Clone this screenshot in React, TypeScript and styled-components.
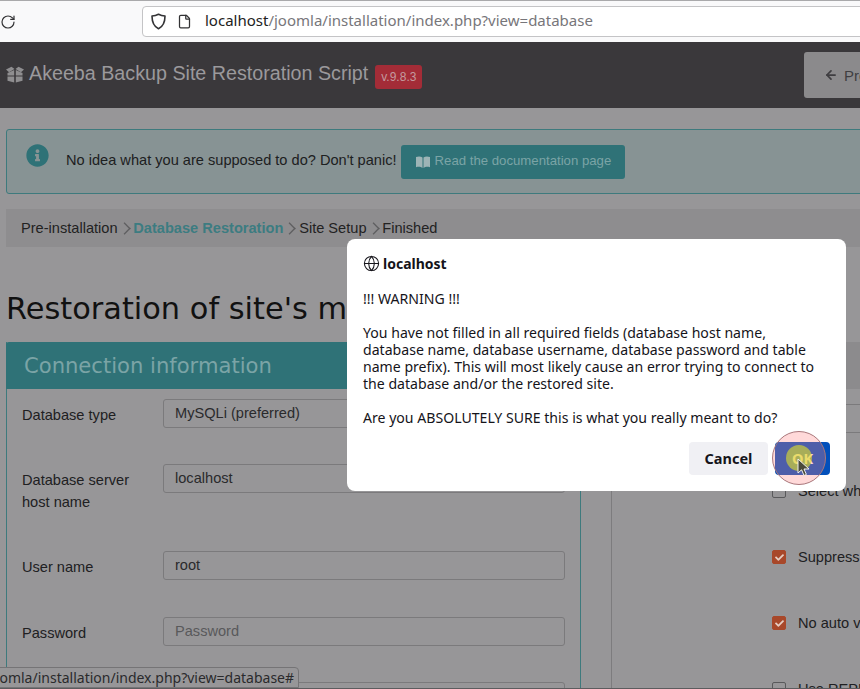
import { createGlobalStyle, styled } from 'styled-components'
import { ArrowLeft, File, Globe, RotateCw } from 'lucide-react'
import { FaCheck, FaInfoCircle } from 'react-icons/fa'

const GlobalStyle = createGlobalStyle`
  html, body {
    margin: 0;
    padding: 0;
    overflow: hidden;
    background: #979698;
  }
  * {
    box-sizing: border-box;
  }
`

const Frame = styled.div`
  position: relative;
  width: 860px;
  height: 689px;
  overflow: hidden;
  background: #979698;
  font-family: "Liberation Sans", Arial, sans-serif;
  border-bottom: 1px solid #5c5c5e;
`

const BrowserBar = styled.div`
  display: flex;
  align-items: center;
  height: 42px;
  padding-left: 0;
  background: #f9f9fa;
  border-top: 1px solid #a9a9ab;
  color: #333335;
`

const UrlBox = styled.div`
  display: flex;
  align-items: center;
  flex: 1;
  height: 31px;
  margin: -1px -4px 0 126px;
  padding-left: 8px;
  background: #fff;
  border: 1px solid #c4c4c6;
  border-radius: 4px 0 0 4px;
  svg {
    flex: none;
  }
`

const UrlText = styled.span`
  margin-left: 13px;
  font-family: "Noto Sans", sans-serif;
  font-size: 15px;
  line-height: 20px;
  margin-top: -2px;
  color: #77767a;
  b {
    font-weight: 400;
    color: #222;
  }
`

const PageIcon = styled.span`
  display: flex;
  margin-left: 11px;
`

const Navbar = styled.div`
  display: flex;
  align-items: center;
  justify-content: space-between;
  height: 66px;
  padding: 0 0 0 6px;
  background: #3a383b;
  margin-bottom: 21px;
`

const Brand = styled.div`
  display: flex;
  align-items: center;
  color: #9b999c;
  font-size: 19.7px;
  margin-top: -4px;
  svg {
    margin-right: 5px;
    margin-top: 2px;
  }
`

const VersionBadge = styled.span`
  margin-left: 7px;
  padding: 5px 6px;
  background: #a32c37;
  border-radius: 3px;
  color: #c49a9f;
  font-size: 12px;
  margin-top: 7px;
`

const PrevButton = styled.div`
  display: flex;
  align-items: center;
  gap: 6px;
  width: 56px;
  height: 46px;
  padding-left: 20px;
  background: #8b8a8c;
  border-radius: 3px 0 0 3px;
  color: #3f3e41;
  font-size: 15px;
  overflow: hidden;
  svg {
    flex: none;
  }
`

const Content = styled.div`
  width: 1190px;
  margin-left: 6px;
`

const Alert = styled.div`
  display: flex;
  align-items: flex-start;
  height: 65px;
  padding: 14px 0 0 19px;
  background: #879394;
  border: 1px solid #3e7a7d;
  border-radius: 3px;
  margin-bottom: 15px;
  color: #2f7277;
`

const AlertText = styled.span`
  margin: 8px 4px 0 17px;
  font-size: 14.6px;
  color: #1d2021;
`

const DocsButton = styled.div`
  display: flex;
  align-items: center;
  gap: 5px;
  height: 34px;
  margin-top: 1px;
  padding: 0 14px 3px 15px;
  background: #2f7277;
  border-radius: 3px;
  color: #7ba4a6;
  font-size: 13.2px;
  svg {
    margin-top: 3px;
  }
`

const Breadcrumb = styled.div`
  display: flex;
  align-items: center;
  height: 38px;
  padding: 0 15px;
  background: #8e8d8f;
  font-size: 14.6px;
  color: #222;
`

const Crumb = styled.span<{ $active?: boolean }>`
  font-weight: ${p => (p.$active ? 700 : 400)};
  color: ${p => (p.$active ? '#3c7c81' : '#222')};
`

const CrumbSep = styled.span`
  width: 7px;
  height: 7px;
  margin: 0 5.8px 0 3px;
  border-top: 1.5px solid #5e5e60;
  border-right: 1.5px solid #5e5e60;
  transform: rotate(45deg) scale(1.25);
`

const Heading = styled.h1`
  margin: 44px 0 15px;
  font-family: "DejaVu Sans", sans-serif;
  font-size: 30.4px;
  font-weight: 400;
  line-height: 36px;
  color: #111;
  white-space: nowrap;
`

const Columns = styled.div`
  display: flex;
  gap: 30px;
`

const Panel = styled.div<{ $teal?: boolean }>`
  width: 575px;
  flex: none;
  height: 400px;
  border-left: 1px solid ${p => (p.$teal ? '#3e7a7d' : '#7d7c7e')};
  border-right: 1px solid ${p => (p.$teal ? '#3e7a7d' : '#7d7c7e')};
`

const PanelHead = styled.div<{ $teal?: boolean }>`
  height: 47px;
  margin-left: -1px;
  padding: 10px 18px;
  background: ${p => (p.$teal ? '#2f7277' : '#8c8b8d')};
  border-radius: 3px 3px 0 0;
  font-family: "DejaVu Sans", sans-serif;
  font-size: 21.1px;
  line-height: 27px;
  color: #7ba4a6;
`

const FormGrid = styled.div`
  display: grid;
  grid-template-columns: 125px 402px;
  column-gap: 16px;
  row-gap: 36px;
  padding: 10px 15px 0;
`

const FieldLabel = styled.div`
  padding: 6px 0 1.6px;
  font-size: 14.6px;
  line-height: 21.7px;
  color: #202022;
`

const TextBox = styled.div<{ $placeholder?: boolean }>`
  height: 29px;
  padding: 3px 11px;
  border: 1px solid #7b7a7c;
  border-radius: 3px;
  font-size: 14.6px;
  line-height: 20px;
  color: ${p => (p.$placeholder ? '#59595b' : '#2a2a2c')};
`

const OptionList = styled.div`
  display: flex;
  flex-direction: column;
  padding: 15px 0 0 160px;
`

const WideBox = styled(TextBox)`
  width: 400px;
  margin-bottom: 48px;
`

const CheckRow = styled.div`
  display: flex;
  align-items: center;
  gap: 12px;
  height: 20px;
  margin-bottom: 46px;
  font-size: 14.6px;
  color: #202022;
  white-space: nowrap;
`

const CheckBox = styled.span<{ $on?: boolean }>`
  display: flex;
  align-items: center;
  justify-content: center;
  width: 14px;
  height: 14px;
  background: ${p => (p.$on ? '#a8482a' : 'transparent')};
  border: 1px solid ${p => (p.$on ? '#a8482a' : '#59595b')};
  border-radius: 2px;
  color: #e6cdc2;
`

const StatusTip = styled.div`
  position: absolute;
  left: -78px;
  bottom: 0;
  height: 21px;
  padding: 0 4px 0 0;
  background: #979698;
  border: 1px solid #757476;
  border-radius: 0 4px 0 0;
  font-family: "Noto Sans", sans-serif;
  font-size: 14px;
  line-height: 20px;
  color: #2a2a2c;
  white-space: nowrap;
`

const Dialog = styled.div`
  position: absolute;
  left: 347px;
  top: 239px;
  width: 499px;
  height: 252px;
  padding: 14px 16px 16px;
  background: #fff;
  border-radius: 8px;
  font-family: "Noto Sans", sans-serif;
  font-size: 14.1px;
  line-height: 17px;
  color: #15141a;
`

const DialogHost = styled.div`
  display: flex;
  align-items: center;
  gap: 3px;
  height: 20px;
  margin-bottom: 17px;
  font-weight: 700;
  font-size: 14px;
`

const DialogLine = styled.p`
  margin: 0 0 17px;
  white-space: nowrap;
  &:last-of-type {
    margin-bottom: 0;
  }
`

const DialogActions = styled.div`
  display: flex;
  justify-content: flex-end;
  gap: 7px;
  margin-top: 16px;
`

const DialogButton = styled.div<{ $primary?: boolean }>`
  display: flex;
  align-items: center;
  justify-content: center;
  width: ${p => (p.$primary ? '55px' : '79px')};
  height: 33px;
  padding-bottom: 1px;
  background: ${p => (p.$primary ? '#0250bb' : '#f0f0f4')};
  border-radius: 4px;
  font-weight: 700;
  font-size: 14.5px;
  color: ${p => (p.$primary ? '#fbfbfe' : '#15141a')};
`

const ClickRing = styled.div`
  position: absolute;
  left: 772px;
  top: 431px;
  display: flex;
  align-items: center;
  justify-content: center;
  width: 54px;
  height: 54px;
  background: rgba(255, 130, 130, 0.3);
  border: 1px solid #a9777b;
  border-radius: 50%;
`

const ClickDot = styled.div`
  width: 26px;
  height: 26px;
  background: rgba(225, 222, 40, 0.62);
  border-radius: 50%;
`

const Pointer = styled.svg`
  position: absolute;
  left: 797px;
  top: 458px;
`

const ShieldIcon = () => (
  <svg width="15" height="17" viewBox="0 0 15 17" fill="none" stroke="currentColor" strokeWidth="1.6" strokeLinejoin="round">
    <path d="M7.5 1.2 C9.5 2.2 11.6 2.8 14 3 C14 9 12.6 13.2 7.5 15.8 C2.4 13.2 1 9 1 3 C3.4 2.8 5.5 2.2 7.5 1.2 Z" />
  </svg>
)

const PackageIcon = () => (
  <svg width="18" height="17" viewBox="0 0 18 17" fill="#8f8e90">
    <path d="M0 3.5 L5.5 0.8 L8.5 3 L3 6.2 Z" />
    <path d="M18 3.5 L12.5 0.8 L9.5 3 L15 6.2 Z" />
    <path d="M1.5 7 L8.2 4 L8.2 9.5 L1.5 9.5 Z" />
    <path d="M16.5 7 L9.8 4 L9.8 9.5 L16.5 9.5 Z" />
    <path d="M1.5 10.5 L8.2 10.5 L8.2 16.6 L1.5 14.8 Z" />
    <path d="M16.5 10.5 L9.8 10.5 L9.8 16.6 L16.5 14.8 Z" />
  </svg>
)

const BookIcon = () => (
  <svg width="14" height="12" viewBox="0 0 14 12" fill="#9db4b6">
    <path d="M0 1 C2.5 0 5 0.3 6.5 1.5 L6.5 12 C5 10.8 2.5 10.5 0 11.2 Z" />
    <path d="M14 1 C11.5 0 9 0.3 7.5 1.5 L7.5 12 C9 10.8 11.5 10.5 14 11.2 Z" />
  </svg>
)

const App = () => {
  return <Frame>
    <GlobalStyle />
    <BrowserBar>
      <RotateCw size={16} strokeWidth={1.8} />
      <UrlBox>
        <ShieldIcon />
        <PageIcon><File size={15} strokeWidth={2} /></PageIcon>
        <UrlText><b>localhost</b>/joomla/installation/index.php?view=database</UrlText>
      </UrlBox>
    </BrowserBar>
    <Navbar>
      <Brand>
        <PackageIcon />
        Akeeba Backup Site Restoration Script
        <VersionBadge>v.9.8.3</VersionBadge>
      </Brand>
      <PrevButton>
        <ArrowLeft size={14} strokeWidth={3} />
        Previous
      </PrevButton>
    </Navbar>
    <Content>
      <Alert>
        <FaInfoCircle size={23} />
        <AlertText>No idea what you are supposed to do? Don't panic!</AlertText>
        <DocsButton>
          <BookIcon />
          Read the documentation page
        </DocsButton>
      </Alert>
      <Breadcrumb>
        <Crumb>Pre-installation</Crumb>
        <CrumbSep />
        <Crumb $active>Database Restoration</Crumb>
        <CrumbSep />
        <Crumb>Site Setup</Crumb>
        <CrumbSep />
        <Crumb>Finished</Crumb>
      </Breadcrumb>
      <Heading>Restoration of site's main database</Heading>
      <Columns>
        <Panel $teal>
          <PanelHead $teal>Connection information</PanelHead>
          <FormGrid>
            <FieldLabel>Database type</FieldLabel>
            <TextBox>MySQLi (preferred)</TextBox>
            <FieldLabel>Database server<br />host name</FieldLabel>
            <TextBox>localhost</TextBox>
            <FieldLabel>User name</FieldLabel>
            <TextBox>root</TextBox>
            <FieldLabel>Password</FieldLabel>
            <TextBox $placeholder>Password</TextBox>
            <FieldLabel />
            <TextBox />
          </FormGrid>
        </Panel>
        <Panel>
          <PanelHead />
          <OptionList>
            <WideBox />
            <CheckRow><CheckBox />Select which tables to restore</CheckRow>
            <CheckRow><CheckBox $on><FaCheck size={9} /></CheckBox>Suppress foreign key checks</CheckRow>
            <CheckRow><CheckBox $on><FaCheck size={9} /></CheckBox>No auto value on zero</CheckRow>
            <CheckRow><CheckBox />Use REPLACE instead of INSERT</CheckRow>
          </OptionList>
        </Panel>
      </Columns>
    </Content>
    <StatusTip>localhost/joomla/installation/index.php?view=database#</StatusTip>
    <Dialog>
      <DialogHost><Globe size={17} strokeWidth={1.5} />localhost</DialogHost>
      <DialogLine>!!! WARNING !!!</DialogLine>
      <DialogLine>
        You have not filled in all required fields (database host name,<br />
        database name, database username, database password and table<br />
        name prefix). This will most likely cause an error trying to connect to<br />
        the database and/or the restored site.
      </DialogLine>
      <DialogLine>Are you ABSOLUTELY SURE this is what you really meant to do?</DialogLine>
      <DialogActions>
        <DialogButton>Cancel</DialogButton>
        <DialogButton $primary>OK</DialogButton>
      </DialogActions>
    </Dialog>
    <ClickRing><ClickDot /></ClickRing>
    <Pointer width="14" height="20" viewBox="0 0 14 20">
      <path d="M1 1 L1 15 L4.6 11.8 L7 17.5 L9.4 16.4 L7 11 L12 11 Z" fill="#4a4a3a" stroke="#f0f0f0" strokeWidth="1" />
    </Pointer>
  </Frame>
}

export default App
